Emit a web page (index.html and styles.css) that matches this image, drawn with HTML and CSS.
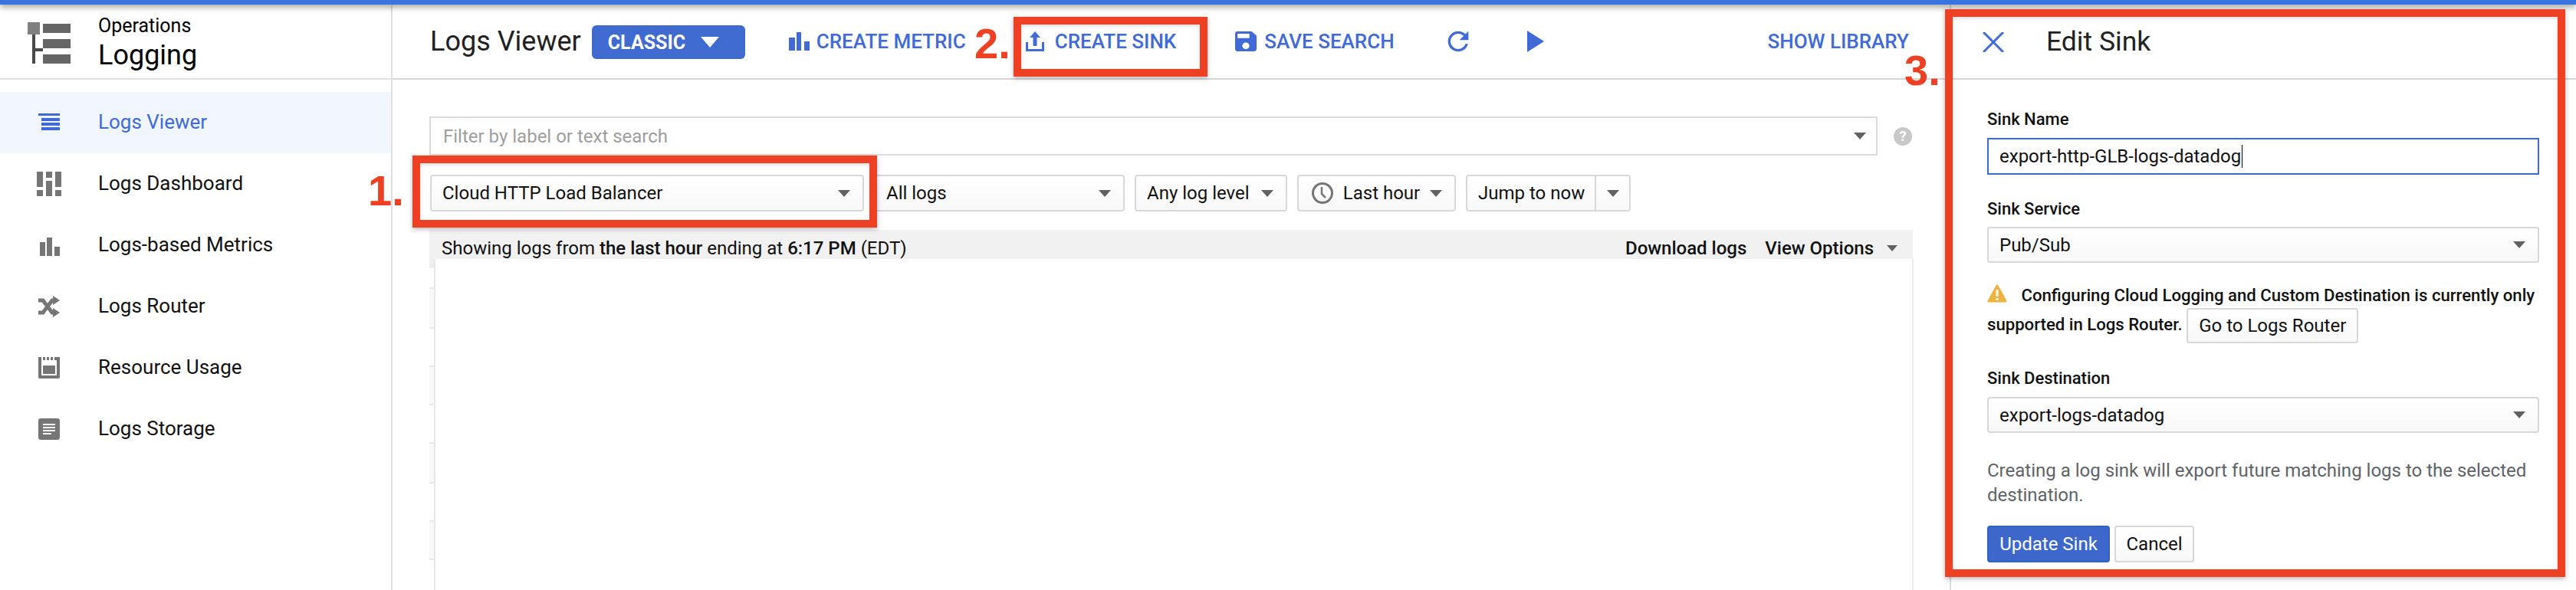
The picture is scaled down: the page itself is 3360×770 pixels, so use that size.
FILE: index.html
```html
<!DOCTYPE html>
<html lang="en">
<head>
	<meta charset="UTF-8">
	<title>Logs Viewer</title>
	<link rel="stylesheet" href="styles.css">
</head>
<body>
<div class="page">
	<div class="topbar"></div>
	<div class="columns">

		<div class="sidebar">
			<div class="brand">
				<svg class="brand-icon" viewBox="0 0 56 54">
					<path fill="#4a4a4a" d="M6 16h4v18h10v4H10v16h10v4H6z"/>
					<rect x="0" y="0" width="16" height="16" fill="#808080"/>
					<rect x="20" y="2" width="36" height="12" fill="#666"/>
					<rect x="20" y="22" width="36" height="12" fill="#666"/>
					<rect x="20" y="42" width="36" height="12" fill="#666"/>
				</svg>
				<div class="brand-text">
					<div class="brand-top">Operations</div>
					<div class="brand-name">Logging</div>
				</div>
			</div>
			<ul class="nav">
				<li class="nav-item active">
					<svg class="nav-icon" viewBox="0 0 32 32"><path fill="#3f6ad8" d="M2 4h28v3H2zM6 10h24v4H6zM6 16h24v4H6zM6 22h24v4H6z"/></svg>
					Logs Viewer
				</li>
				<li class="nav-item">
					<svg class="nav-icon" viewBox="0 0 32 32"><path fill="#757575" d="M0 0h8v20H0zM0 24h8v8H0zM12 0h8v8h-8zM12 12h8v20h-8zM24 0h8v20h-8zM24 24h8v8h-8z"/></svg>
					Logs Dashboard
				</li>
				<li class="nav-item">
					<svg class="nav-icon" viewBox="0 0 32 32"><path fill="#757575" d="M4 12h7v18H4zM13 6h7v24h-7zM23 18h7v12h-7z"/></svg>
					Logs-based Metrics
				</li>
				<li class="nav-item">
					<svg class="nav-icon" viewBox="0 0 32 32">
						<path fill="none" stroke="#757575" stroke-width="5" d="M2 8h6l12 16h3M2 24h6l12-16h3"/>
						<path fill="#757575" d="M21 2l9 6-9 6zM21 18l9 6-9 6z"/>
					</svg>
					Logs Router
				</li>
				<li class="nav-item">
					<svg class="nav-icon" viewBox="0 0 32 32">
						<path fill="#757575" d="M2 2h4v24h20V2h4v26a2 2 0 0 1-2 2H4a2 2 0 0 1-2-2z"/>
						<path fill="#757575" d="M8 2h3v4H8zM13 2h3v4h-3zM18 2h3v4h-3zM23 2h3v4h-3zM8 13h16v11H8z"/>
					</svg>
					Resource Usage
				</li>
				<li class="nav-item">
					<svg class="nav-icon" viewBox="0 0 32 32">
						<rect x="2" y="2" width="28" height="28" rx="3" fill="#757575"/>
						<path fill="#fff" d="M8 9h16v2H8zM8 13h16v2H8zM8 17h16v2H8zM8 21h11v2H8z"/>
					</svg>
					Logs Storage
				</li>
			</ul>
		</div>

		<div class="main">
			<div class="toolbar">
				<div class="page-title">Logs Viewer</div>
				<div class="classic">CLASSIC <span class="caret-white"></span></div>
				<a class="action metric">
					<svg width="27" height="24" viewBox="0 0 27 24"><path fill="#3f6ad8" d="M0 7h8v17H0zM10 0h6v24h-6zM20 12h7v12h-7z"/></svg>
					CREATE METRIC
				</a>
				<a class="action sink">
					<svg width="24" height="26" viewBox="0 0 24 26"><path fill="#3f6ad8" d="M12 0L5 8h4.5v11h5V8H19zM0 14h3v9h18v-9h3v12H0z"/></svg>
					CREATE SINK
				</a>
				<a class="action save">
					<svg width="28" height="26" viewBox="3 3 18 18" preserveAspectRatio="none"><path fill="#3f6ad8" d="M17 3H5c-1.11 0-2 .9-2 2v14c0 1.1.89 2 2 2h14c1.1 0 2-.9 2-2V7l-4-4zm-5 16c-1.66 0-3-1.34-3-3s1.34-3 3-3 3 1.34 3 3-1.34 3-3 3zm3-10H5V5h10v4z"/></svg>
					SAVE SEARCH
				</a>
				<svg class="refresh" width="40" height="40" viewBox="0 0 24 24"><path fill="#3f6ad8" d="M17.65 6.35C16.2 4.9 14.21 4 12 4c-4.42 0-7.99 3.58-7.99 8s3.57 8 7.99 8c3.73 0 6.84-2.55 7.73-6h-2.08c-.82 2.33-3.04 4-5.65 4-3.31 0-6-2.69-6-6s2.69-6 6-6c1.66 0 3.14.69 4.22 1.78L13 11h7V4l-2.35 2.35z"/></svg>
				<span class="play"></span>
				<a class="action library">SHOW LIBRARY</a>
			</div>

			<div class="filter-row">
				<div class="filter">Filter by label or text search <span class="caret"></span></div>
				<div class="help">?</div>
			</div>

			<div class="select-row">
				<div class="select w-resource">Cloud HTTP Load Balancer <span class="caret"></span></div>
				<div class="select w-logs">All logs <span class="caret"></span></div>
				<div class="select w-level">Any log level <span class="caret"></span></div>
				<div class="select w-time">
					<svg class="clock" width="28" height="28" viewBox="0 0 28 28"><circle cx="14" cy="14" r="12.5" fill="none" stroke="#757575" stroke-width="3"/><path fill="none" stroke="#757575" stroke-width="2.5" d="M13 6v9l5 5"/></svg>
					Last hour <span class="caret"></span>
				</div>
				<div class="select w-jump">
					<span class="jump-text">Jump to now</span>
					<span class="jump-arrow"><span class="caret"></span></span>
				</div>
			</div>

			<div class="status">
				<div>Showing logs from <b>the last hour</b> ending at <b>6:17 PM</b> (EDT)</div>
				<div class="status-right"><b>Download logs</b><b class="view-options">View Options</b><span class="caret small"></span></div>
			</div>

			<div class="logs">
				<div class="gutter">
					<div class="tick first"></div>
					<div class="tick tall tint"></div>
					<div class="tick"></div>
					<div class="tick tint"></div>
					<div class="tick"></div>
					<div class="tick tall tint"></div>
					<div class="tick"></div>
					<div class="tick tint"></div>
					<div class="tick"></div>
				</div>
				<div class="log-body"></div>
			</div>
		</div>

		<div class="panel">
			<div class="panel-head">
				<svg class="close" width="28" height="26" viewBox="0 0 28 26"><path fill="none" stroke="#3f6ad8" stroke-width="3" d="M1 0l26 26M27 0L1 26"/></svg>
				<div class="panel-title">Edit Sink</div>
			</div>
			<div class="form">
				<div class="label">Sink Name</div>
				<div class="input">export-http-GLB-logs-datadog<span class="cursor"></span></div>

				<div class="label next">Sink Service</div>
				<div class="select wide">Pub/Sub <span class="caret"></span></div>

				<div class="warning">
					<svg class="warn-icon" width="26" height="24" viewBox="0 0 26 24">
						<path fill="#ecb33f" stroke="#ecb33f" stroke-width="3" stroke-linejoin="round" d="M13 2L2 22h22z"/>
						<path fill="#fff" d="M11.5 7h3v9h-3zM11.5 18h3v3h-3z"/>
					</svg>
					Configuring Cloud Logging and Custom Destination is currently only supported in Logs Router.
					<span class="btn go">Go to Logs Router</span>
				</div>

				<div class="label dest">Sink Destination</div>
				<div class="select wide">export-logs-datadog <span class="caret"></span></div>

				<p class="note">Creating a log sink will export future matching logs to the selected destination.</p>

				<div class="buttons">
					<span class="btn primary">Update Sink</span>
					<span class="btn">Cancel</span>
				</div>
			</div>
		</div>

	</div>

	<div class="mark box-1"></div>
	<div class="mark box-2"></div>
	<div class="mark box-3"></div>
	<div class="num num-1">1.</div>
	<div class="num num-2">2.</div>
	<div class="num num-3">3.</div>
</div>
</body>
</html>
```

FILE: styles.css
```css
* { padding: 0; margin: 0; box-sizing: border-box; }
body { font-family: Roboto, "Liberation Sans", sans-serif; font-size: 24px; color: #202124; background: #fff; overflow: hidden; }
.page { position: relative; width: 3360px; height: 770px; display: flex; flex-direction: column; overflow: hidden; }

.topbar { height: 6px; background: #3874df; box-shadow: 0 2px 8px rgba(0,0,0,.55); position: relative; z-index: 2; flex: none; }
.columns { flex: 1; display: flex; min-height: 0; }

/* left nav */
.sidebar { width: 512px; flex: none; border-right: 2px solid #e0e0e0; }
.brand { height: 98px; border-bottom: 2px solid #e0e0e0; display: flex; align-items: center; padding-left: 36px; color: #000; }
.brand-icon { width: 56px; height: 54px; margin-right: 36px; margin-top: 4px; }
.brand-text { padding-top: 6px; }
.brand-top { font-size: 25px; line-height: 30px; }
.brand-name { font-size: 36px; line-height: 46px; }
.nav { list-style: none; padding-top: 16px; }
.nav-item { height: 80px; display: flex; align-items: center; padding: 0 0 2px 48px; font-size: 26px; color: #111; }
.nav-item.active { background: #f0f5fe; color: #3f6ad8; }
.nav-icon { width: 32px; height: 32px; margin-right: 48px; margin-top: 2px; flex: none; }

/* main column */
.main { width: 2031px; flex: none; display: flex; flex-direction: column; padding-right: 47px; }
.toolbar { height: 98px; margin-right: -47px; border-bottom: 2px solid #d6d6d6; display: flex; align-items: center; padding-left: 49px; padding-right: 53px; }
.page-title { font-size: 36px; color: #212121; margin-right: 14px; }
.classic { width: 200px; height: 44px; background: #3f6ad0; border-radius: 6px; color: #fff; font-weight: 700; font-size: 25px; display: flex; align-items: center; padding-left: 21px; margin-top: 2px; }
.caret-white { width: 0; height: 0; border-left: 12px solid transparent; border-right: 12px solid transparent; border-top: 14px solid #fff; margin-left: 20px; }
.action { display: flex; align-items: center; gap: 9px; color: #3f6ad8; font-size: 26px; font-weight: 500; white-space: nowrap; }
.metric { margin-left: 57px; }
.sink { margin-left: 78px; gap: 14px; }
.save { margin-left: 77px; gap: 10px; }
.refresh { margin-left: 63px; }
.play { width: 0; height: 0; border-top: 14px solid transparent; border-bottom: 14px solid transparent; border-left: 22px solid #3f6ad8; margin-left: 70px; }
.library { margin-left: auto; }

.caret { display: inline-block; width: 0; height: 0; border-left: 8px solid transparent; border-right: 8px solid transparent; border-top: 9px solid #616161; }
.caret.small { border-left-width: 7px; border-right-width: 7px; border-top-width: 8px; }

.filter-row { display: flex; align-items: center; padding-left: 48px; margin-top: 48px; }
.filter { width: 1889px; height: 51px; border: 2px solid #dcdcdc; display: flex; align-items: center; justify-content: space-between; padding: 0 13px 0 16px; color: #9e9e9e; }
.help { width: 24px; height: 24px; border-radius: 50%; background: #c8c8c8; color: #fff; font-size: 19px; font-weight: 700; text-align: center; line-height: 24px; margin-left: 21px; }

.select-row { display: flex; padding-left: 49px; margin-top: 25px; gap: 13px; }
.select { height: 48px; border: 2px solid #d8d8d8; border-radius: 4px; background: linear-gradient(#fff, #f8f8f8); display: flex; align-items: center; justify-content: space-between; padding: 0 16px 0 14px; color: #111; }
.w-resource { width: 566px; }
.w-logs { width: 327px; }
.w-level { width: 199px; }
.w-time { width: 207px; padding-left: 17px; gap: 8px; }
.w-jump { width: 215px; padding: 0; }
.clock { flex: none; }
.jump-text { padding-left: 14px; }
.jump-arrow { width: 45px; height: 100%; border-left: 2px solid #d8d8d8; display: flex; align-items: center; justify-content: center; }

.status { margin-left: 48px; margin-top: 24px; height: 38px; width: 1935px; background: #f1f1f1; display: flex; justify-content: space-between; align-items: center; padding: 10px 20px 0 16px; flex: none; color: #111; }
.status b { font-weight: 500; }
.status-right { display: flex; align-items: center; }
.view-options { margin-left: 24px; margin-right: 17px; }

.logs { flex: 1; margin-left: 48px; width: 1936px; display: flex; min-height: 0; }
.gutter { width: 6px; flex: none; }
.tick { height: 50px; border-top: 2px solid #e8e8e8; }
.tick.first { height: 37px; border-top: 0; background: linear-gradient(#eee 12px, #fff 12px); }
.tick.tall { height: 52px; }
.tick.tint { background: #f8f8f8; }
.log-body { flex: 1; border-left: 2px solid #e8e8e8; border-right: 2px solid #eee; }

/* right panel */
.panel { flex: 1; border-left: 2px solid #ddd; }
.panel-head { height: 98px; border-bottom: 2px solid #d6d6d6; display: flex; align-items: center; padding-left: 41px; }
.close { margin-right: 55px; margin-top: 2px; }
.panel-title { font-size: 35.5px; color: #212121; }
.form { padding: 40px 48px 0 47px; }
.label { font-size: 22px; font-weight: 500; line-height: 24px; margin-bottom: 12px; color: #111; }
.label.next { margin-top: 33px; margin-bottom: 11px; }
.label.dest { margin-top: 34px; }
.input { height: 48px; border: 2px solid #3f6ad0; display: flex; align-items: center; padding-left: 14px; color: #111; }
.cursor { width: 1px; height: 30px; background: #000; margin-left: 1px; }
.wide { width: 720px; height: 47px; }
.warning { margin-top: 26px; font-size: 22.15px; font-weight: 500; line-height: 33px; color: #111; }
.warn-icon { margin-right: 13px; vertical-align: -2px; }
.btn { display: inline-flex; align-items: center; justify-content: center; height: 46px; padding: 0 14px; border: 2px solid #d8d8d8; border-radius: 4px; background: linear-gradient(#fff, #f8f8f8); font-size: 24px; font-weight: 400; color: #111; }
.go { vertical-align: middle; }
.note { margin-top: 33px; color: #5f6368; line-height: 32px; }
.buttons { display: flex; gap: 6px; margin-top: 24px; }
.buttons .btn { height: 48px; }
.primary { width: 160px; background: #3d67cb; border-color: #3461c4; color: #fff; }
.buttons .btn:not(.primary) { width: 104px; }

/* annotations drawn over the screen */
.mark { position: absolute; border: 10px solid #ee4023; box-shadow: 0 2px 6px rgba(0,0,0,.3), inset 0 2px 5px rgba(0,0,0,.15); z-index: 3; }
.box-1 { left: 538px; top: 203px; width: 606px; height: 94px; }
.box-2 { left: 1322px; top: 22px; width: 253px; height: 78px; }
.box-3 { left: 2537px; top: 12px; width: 809px; height: 741px; }
.num { position: absolute; font-family: "Liberation Sans", Arial, sans-serif; font-weight: 700; font-size: 56px; line-height: 56px; color: #ee4023; z-index: 3; }
.num-1 { left: 480px; top: 221px; }
.num-2 { left: 1271px; top: 29px; }
.num-3 { left: 2484px; top: 64px; }
```
